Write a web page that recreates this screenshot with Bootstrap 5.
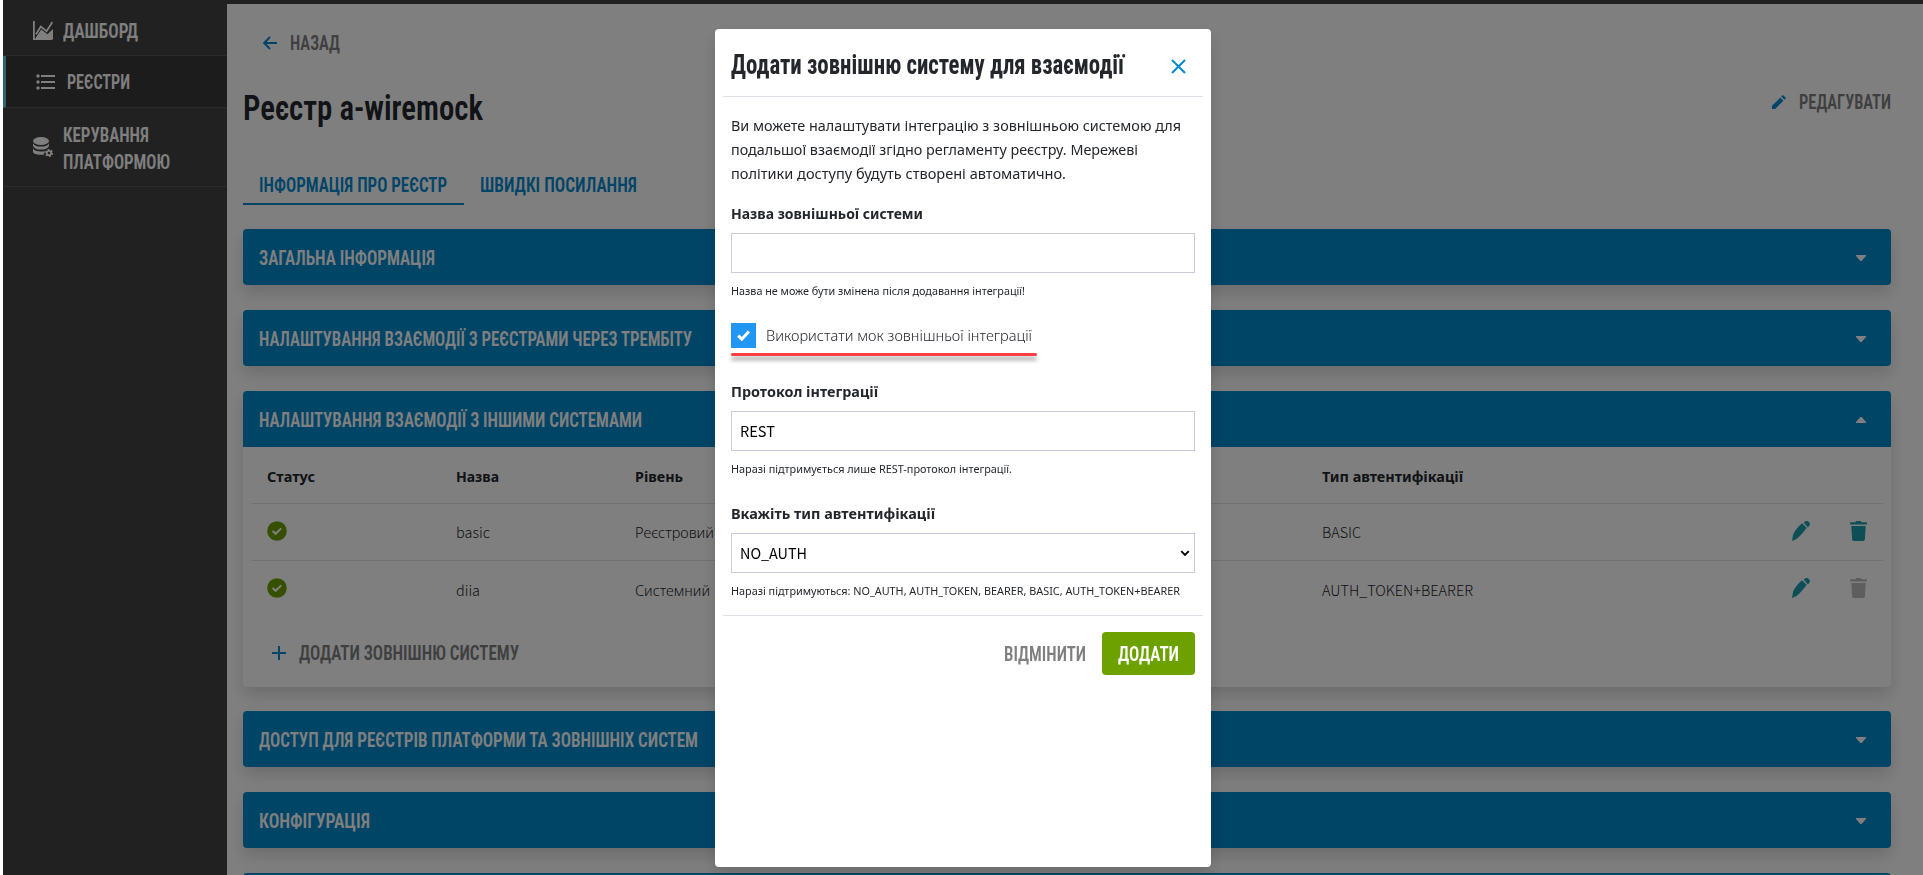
<!DOCTYPE html>
<html lang="uk">
<head>
<meta charset="utf-8">
<title>Реєстр a-wiremock</title>
<link href="https://cdn.jsdelivr.net/npm/bootstrap@5.3.0/dist/css/bootstrap.min.css" rel="stylesheet">
<style>
html,body{height:100%;overflow:hidden}
body{font-family:"Noto Sans","Noto Sans CJK SC",sans-serif;font-size:15px;line-height:24px;color:#23272c;background:#fff;padding-left:3px}
.latin{font-family:"Noto Sans CJK SC","Noto Sans",sans-serif;font-size:14.5px}
.cond{font-family:Roboto,sans-serif;font-stretch:75%;font-weight:600;font-size:20.5px;line-height:26px;text-transform:uppercase}
.fit{display:inline-block;white-space:nowrap;transform-origin:0 50%}
svg{display:block;flex:none}
.side{width:224px;background:#434343;color:#fff}
.side-item{border-bottom:1px solid #575757;height:52px;padding-left:30px;gap:10px}
.side-item.first{height:56px;padding-top:6px}
.side-item.active{background:#383838;border-left:3px solid #5fcbd5}
.side-item.active .cond{padding-top:1px}
.side-item.tall{height:79px}
.side-item.tall .cond{line-height:27px}
.side-item.tall>div{padding-top:3px}
.main{border-top:4px solid #434343;background:#fff}
.muted{color:#7f7f7f}
.blue{color:#008ad0}
.back{padding:26px 0 0 20px;gap:13px}
.title-row{height:58px;margin-top:23px}
.page-title{font-family:Roboto,sans-serif;font-stretch:75%;font-weight:600;font-size:35.5px;line-height:48px;margin:0}
.edit{margin-top:-13px}
.edit svg{margin-right:9px}
.tabs{margin:28px 0 24px}
.tab{padding:7px 17px 5px 16px;height:40px;border-bottom:2px solid transparent}
.tab.active{border-color:#008ad0}
.panel{box-shadow:0 8px 16px rgba(0,0,0,.15);border-radius:4px;margin-bottom:25px;background:#fff}
.panel-head{background:#0088cd;color:#fff;height:56px;border-radius:4px;padding:2px 25px 0 16px}
.panel.open .panel-head{border-radius:4px 4px 0 0}
.panel.open{height:296px;margin-bottom:24px}
.grid-row{display:grid;grid-template-columns:189px 179px 687px 1fr;height:57px;margin:0 8px;padding:0 16px 3px;align-items:center;border-bottom:1px solid #dee2e6;font-weight:300}
.grid-row.last{border:0}
.grid-row b{padding-top:4px;font-weight:700}
.grid-row .txt{padding-top:3px}
.grid-row svg{position:relative;left:-.5px}
.bin{margin-left:39px}
.add-row{padding:22px 0 0 29px;gap:13px}
.overlay{left:3px;width:auto;right:0;background:rgba(0,0,0,.5);overflow:hidden}
.dialog{width:496px;max-width:none;margin:29px auto 0}
.dialog .modal-content{height:838px;border:0;border-radius:4px;padding:0 8px;box-shadow:0 8px 16px rgba(0,0,0,.15);color:#23272c}
.dialog .modal-header{height:68px;padding:0 17px 0 8px;border-color:#dee0e8;border-radius:0}
.dialog .modal-title{font-family:Roboto,sans-serif;font-stretch:75%;font-weight:700;font-size:27px;line-height:36px;padding-top:4px}
.dialog .modal-body{padding:16px 8px 14px;flex:none}
.field{height:40px;border:1px solid #cacbdc;color:#000;padding:0 8px;margin-top:8px}
.hint{font-size:11.2px;line-height:20px;margin-top:8px}
.check{margin-top:22px;gap:10px}
.checktext{margin-top:-1px}
.last-label{margin-top:22px}
.tick{width:25px;height:25px;background:#2296f3}
.redline{width:306px;height:3px;background:#f83f41;border-radius:2px;margin:5px 0 23px;box-shadow:0 4px 4px rgba(0,0,0,.4)}
.dialog .modal-footer{border-color:#dee0e8;padding:16px 8px 0;gap:16px;border-radius:0}
.dialog .modal-footer>*{margin-top:0;margin-bottom:0;margin-left:0}
.dialog .modal-footer .cond{padding-top:1px}
.ok{background:#6ca100;color:#fff;height:43px;padding:0 16px;border:0;border-radius:4px}
</style>
</head>
<body>
<svg width="0" height="0" class="position-absolute">
<symbol id="ok" viewBox="0 0 20 20"><circle cx="10" cy="10" r="9.8" fill="#6ca100"/><path d="M5.600 10l3 2.800 5.600-5.400" fill="none" stroke="#fff" stroke-width="2"/></symbol>
<symbol id="pen" viewBox="0 0 20 20"><path d="M1 20l1.100-6.500c2-4.500 5.500-8.400 9-11.200l4.600 4.400C12.500 11 9 15.500 5.600 18zM12.700 1.500L14 .6a2.600 2.600 0 0 1 3.400 0l.9 1a2.600 2.600 0 0 1 0 3.200l-1.400 1.600z" fill="#1d9fae"/></symbol>
<symbol id="bin" viewBox="0 0 17 20"><path d="M.8 1.200h4.400L6.500 0h4l1.300 1.200h4.400q.8 0 .8 1.200t-.8 1.200H.8Q0 3.600 0 2.400t.8-1.200zM1.300 5h14.400l-.8 13.500a1.600 1.600 0 0 1-1.600 1.500H3.700a1.600 1.600 0 0 1-1.600-1.500z" fill="currentColor"/></symbol>
<symbol id="down" viewBox="0 0 10 6"><path d="M0 0h10v1L5.600 6H4.400L0 1z" fill="#fff"/></symbol>
</svg>
<div class="d-flex h-100">
  <aside class="side flex-shrink-0">
    <div class="side-item first d-flex align-items-center">
      <svg width="20" height="20" viewBox="0 0 20 20"><path d="M.9 0v18.200h18.500" fill="none" stroke="#fff" stroke-width="1.800"/><path d="M3 13.200L7.800 5.600l5.800 4.600L19.400 1" fill="none" stroke="#fff" stroke-width="1.800"/><path d="M3 18v-1.800l5.200-7.600 6.300 4.700L20 8v10z" fill="#fff"/></svg>
      <span class="cond fit" data-w="75">Дашборд</span>
    </div>
    <div class="side-item active d-flex align-items-center">
      <svg width="21" height="16" viewBox="0 0 21 16"><g fill="#fff"><circle cx="2" cy="2" r="1.700"/><circle cx="2" cy="8" r="1.700"/><circle cx="2" cy="14" r="1.700"/><path d="M5 1h14v2H5zM5 7h14v2H5zM5 13h14v2H5z"/></g></svg>
      <span class="cond fit" data-w="63">Реєстри</span>
    </div>
    <div class="side-item tall d-flex align-items-center">
      <svg width="20" height="20" viewBox="0 0 20 20"><ellipse cx="8" cy="4" rx="8" ry="4" fill="#fff"/><path d="M0 6c1 2.800 4 3.600 8 3.600s7-.8 8-3.600v3c-1 2.500-4 3.600-8 3.600S1 11.500 0 9zM0 11.300c1 2.500 4 3.200 8 3.200 1.500 0 3-.2 4-.6l-1.200 3.800C5 18.200 0 17.200 0 14.500z" fill="#fff"/><circle cx="16" cy="16" r="2.200" fill="none" stroke="#fff" stroke-width="1.800"/><circle cx="16" cy="16" r="3.400" fill="none" stroke="#fff" stroke-width="1.400" stroke-dasharray="1.780"/></svg>
      <div class="d-flex flex-column align-items-start">
        <span class="cond fit" data-w="86">Керування</span>
        <span class="cond fit" data-w="107">Платформою</span>
      </div>
    </div>
  </aside>
  <main class="main flex-grow-1" style="min-width:0">
    <div class="ps-3 pe-4 me-2">
      <div class="back d-flex align-items-center muted">
        <svg width="14" height="14" viewBox="0 0 14 14"><path d="M7 1L1.200 7 7 13M1.500 7H14" fill="none" stroke="#008ad0" stroke-width="1.900"/></svg>
        <span class="cond fit" data-w="50">Назад</span>
      </div>
      <div class="title-row d-flex justify-content-between align-items-center">
        <h1 class="page-title"><span class="fit" data-w="240">Реєстр a-wiremock</span></h1>
        <div class="edit d-flex align-items-center muted">
          <svg width="14" height="14" viewBox="0 0 14 14"><path d="M0 14v-3.200L8.300 2.600l3.100 3.100L3.100 14zM9.300 1.600L10.900 0 14 3l-1.600 1.700z" fill="#008ad0"/></svg>
          <span class="cond fit ms-1" data-w="92">Редагувати</span>
        </div>
      </div>
      <nav class="tabs d-flex blue">
        <div class="tab active"><span class="cond fit" data-w="188">Інформація про реєстр</span></div>
        <div class="tab"><span class="cond fit" data-w="157">Швидкі посилання</span></div>
      </nav>
      <div class="panels">
        <section class="panel"><div class="panel-head d-flex align-items-center justify-content-between"><span class="cond fit" data-w="176">Загальна інформація</span><svg width="10" height="6"><use href="#down"/></svg></div></section>
        <section class="panel"><div class="panel-head d-flex align-items-center justify-content-between"><span class="cond fit" data-w="433">Налаштування взаємодії з реєстрами через Трембіту</span><svg width="10" height="6"><use href="#down"/></svg></div></section>
        <section class="panel open">
          <div class="panel-head d-flex align-items-center justify-content-between"><span class="cond fit" data-w="383">Налаштування взаємодії з іншими системами</span><svg width="10" height="6" viewBox="0 0 10 6"><path d="M0 6h10V5L5.600 0H4.400L0 5z" fill="#fff"/></svg></div>
          <div class="grid-row"><b><span class="fit" data-w="48">Статус</span></b><b><span class="fit" data-w="43">Назва</span></b><b><span class="fit" data-w="48">Рівень</span></b><b><span class="fit" data-w="141">Тип автентифікації</span></b></div>
          <div class="grid-row"><svg width="20" height="20"><use href="#ok"/></svg><span class="txt latin"><span class="fit" data-w="34">basic</span></span><span class="txt"><span class="fit" data-w="79">Реєстровий</span></span>
            <div class="d-flex align-items-center"><span class="txt latin me-auto"><span class="fit" data-w="39">BASIC</span></span><svg width="20" height="20"><use href="#pen"/></svg><svg width="17" height="20" class="bin" color="#1d9fae"><use href="#bin"/></svg></div></div>
          <div class="grid-row last"><svg width="20" height="20"><use href="#ok"/></svg><span class="txt latin"><span class="fit" data-w="24">diia</span></span><span class="txt"><span class="fit" data-w="75">Системний</span></span>
            <div class="d-flex align-items-center"><span class="txt latin me-auto"><span class="fit" data-w="151">AUTH_TOKEN+BEARER</span></span><svg width="20" height="20"><use href="#pen"/></svg><svg width="17" height="20" class="bin" color="#bcbcbc"><use href="#bin"/></svg></div></div>
          <div class="add-row d-flex align-items-center muted"><svg width="14" height="14" viewBox="0 0 14 14"><path d="M7 0v14M0 7h14" stroke="#008ad0" stroke-width="2"/></svg><span class="cond fit" data-w="220">Додати зовнішню систему</span></div>
        </section>
        <section class="panel"><div class="panel-head d-flex align-items-center justify-content-between"><span class="cond fit" data-w="439">Доступ для реєстрів платформи та зовнішніх систем</span><svg width="10" height="6"><use href="#down"/></svg></div></section>
        <section class="panel"><div class="panel-head d-flex align-items-center justify-content-between"><span class="cond fit" data-w="111">Конфігурація</span><svg width="10" height="6"><use href="#down"/></svg></div></section>
        <section class="panel"><div class="panel-head"></div></section>
      </div>
    </div>
  </main>
</div>

<div class="modal overlay d-block">
  <div class="modal-dialog dialog">
    <div class="modal-content">
      <div class="modal-header">
        <h2 class="modal-title"><span class="fit" data-w="393">Додати зовнішню систему для взаємодії</span></h2>
        <svg width="15" height="15" viewBox="0 0 15 15" class="mt-2"><path d="M1 1l13 13M14 1L1 14" stroke="#008ad0" stroke-width="2"/></svg>
      </div>
      <div class="modal-body">
        <div class="mb-3">
          <span class="fit" data-w="450">Ви можете налаштувати інтеграцію з зовнішньою системою для</span><br>
          <span class="fit" data-w="407">подальшої взаємодії згідно регламенту реєстру. Мережеві</span><br>
          <span class="fit" data-w="335">політики доступу будуть створені автоматично.</span>
        </div>
        <b class="d-block"><span class="fit" data-w="192">Назва зовнішньої системи</span></b>
        <div class="field"></div>
        <div class="hint"><span class="fit" data-w="294">Назва не може бути змінена після додавання інтеграції!</span></div>
        <div class="check d-flex align-items-center fw-light">
          <div class="tick d-flex align-items-center justify-content-center"><svg width="13" height="11" viewBox="0 0 13 11"><path d="M1.200 5.700l3.600 3.500 7-7.600" fill="none" stroke="#fff" stroke-width="3"/></svg></div>
          <span class="fit checktext" data-w="266">Використати мок зовнішньої інтеграції</span>
        </div>
        <div class="redline"></div>
        <b class="d-block"><span class="fit" data-w="147">Протокол інтеграції</span></b>
        <div class="field d-flex align-items-center latin"><span class="fit" data-w="35">REST</span></div>
        <div class="hint"><span class="fit" data-w="281">Наразі підтримується лише REST-протокол інтеграції.</span></div>
        <b class="d-block last-label"><span class="fit" data-w="204">Вкажіть тип автентифікації</span></b>
        <div class="field d-flex align-items-center justify-content-between latin pe-1"><span class="fit" data-w="67">NO_AUTH</span><svg width="10" height="7" viewBox="0 0 10 7"><path d="M1.200 1.200L5 5l3.800-3.800" fill="none" stroke="#000" stroke-width="1.900"/></svg></div>
        <div class="hint"><span class="fit" data-w="449">Наразі підтримуються: NO_AUTH, AUTH_TOKEN, BEARER, BASIC, AUTH_TOKEN+BEARER</span></div>
      </div>
      <div class="modal-footer">
        <span class="cond fit muted" data-w="82">Відмінити</span>
        <button class="ok me-0"><span class="cond fit" data-w="61">Додати</span></button>
      </div>
    </div>
  </div>
</div>
<script src="https://cdn.jsdelivr.net/npm/bootstrap@5.3.0/dist/js/bootstrap.bundle.min.js"></script>
<script>
document.querySelectorAll('.fit').forEach(function (el) {
  var w = +el.dataset.w, n = el.getBoundingClientRect().width;
  el.style.transform = 'scaleX(' + w / n + ')';
  el.style.marginRight = (w - n) + 'px';
});
</script>
</body>
</html>
